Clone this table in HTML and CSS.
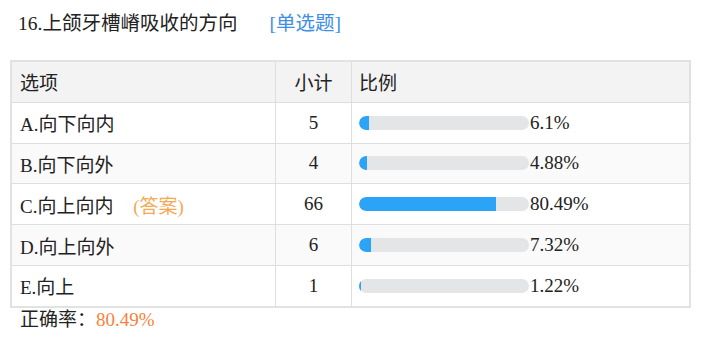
FILE: index.html
```html
<!DOCTYPE html>
<html lang="zh-CN">
<head>
<meta charset="utf-8">
<link rel="stylesheet" href="styles.css">
</head>
<body>
<div class="page">
  <div class="title"><span class="q">16.上颌牙槽嵴吸收的方向</span><span class="type">[单选题]</span></div>
  <table class="stats">
    <thead>
      <tr><th class="c-opt">选项</th><th class="c-num">小计</th><th class="c-ratio">比例</th></tr>
    </thead>
    <tbody>
      <tr><td class="c-opt">A.向下向内</td><td class="c-num">5</td><td class="c-ratio"><div class="ratio"><div class="bar"><div class="fill" style="width:6.1%"></div></div><span class="pct">6.1%</span></div></td></tr>
      <tr class="alt"><td class="c-opt">B.向下向外</td><td class="c-num">4</td><td class="c-ratio"><div class="ratio"><div class="bar"><div class="fill" style="width:4.88%"></div></div><span class="pct">4.88%</span></div></td></tr>
      <tr><td class="c-opt">C.向上向内 <span class="ans">(答案)</span></td><td class="c-num">66</td><td class="c-ratio"><div class="ratio"><div class="bar"><div class="fill" style="width:80.49%"></div></div><span class="pct">80.49%</span></div></td></tr>
      <tr class="alt"><td class="c-opt">D.向上向外</td><td class="c-num">6</td><td class="c-ratio"><div class="ratio"><div class="bar"><div class="fill" style="width:7.32%"></div></div><span class="pct">7.32%</span></div></td></tr>
      <tr><td class="c-opt">E.向上</td><td class="c-num">1</td><td class="c-ratio"><div class="ratio"><div class="bar"><div class="fill" style="width:1.22%"></div></div><span class="pct">1.22%</span></div></td></tr>
    </tbody>
  </table>
  <div class="rate">正确率：<span class="val">80.49%</span></div>
</div>
</body>
</html>
```
FILE: styles.css
```css
html, body { margin: 0; padding: 0; background: #fff; }
body {
  font-family: "Liberation Serif", "Noto Sans CJK SC", serif;
  color: #222;
  font-size: 19px;
}
.page { padding: 11px 10px 0 10px; width: 681px; }
.title { padding-left: 8px; height: 26px; line-height: 26px; font-size: 19.5px; color: #222; }
.title .type { color: #3d8ee6; margin-left: 32px; }
.stats {
  margin-top: 23px;
  width: 681px;
  border-collapse: collapse;
  border: 2px solid #e2e2e2;
  table-layout: fixed;
}
.stats th, .stats td {
  border: 1px solid #dedede;
  height: 39.8px;
  padding: 0 8px;
  font-weight: normal;
  color: #222;
  text-align: left;
}
.stats thead th { background: #f3f3f3; }
.stats tr.alt td { background: #fafafa; }
.c-opt { width: 247px; }
.stats .c-num { width: 59px; text-align: center; }
.stats .c-ratio { padding-left: 7px; }
.ans { color: #f5a955; margin-left: 15px; }
.ratio { display: flex; align-items: center; }
.bar { width: 170px; height: 14px; border-radius: 7px; background: #e4e5e7; overflow: hidden; flex: none; }
.fill { height: 100%; background: #2ba3f7; border-radius: 7px 0 0 7px; }
.pct { margin-left: 1px; }
.rate { padding-left: 10px; margin-top: 0; line-height: 24px; font-size: 19px; color: #222; }
.rate .val { color: #fa7f3c; }
```
